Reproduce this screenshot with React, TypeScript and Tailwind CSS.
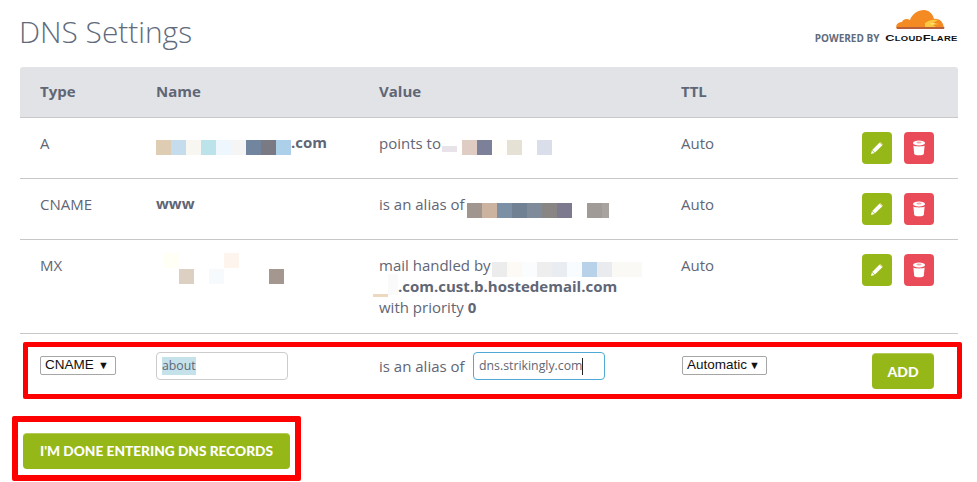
const Cells = ({ colors, className = "" }: { colors: string[]; className?: string }) => (
  <span className={`inline-flex ${className}`}>
    {colors.map((c, i) => (
      <span key={i} className="block h-[15px] w-[15px]" style={{ backgroundColor: c }} />
    ))}
  </span>
);

const PencilIcon = () => (
  <svg width="14" height="14" viewBox="0 0 14 14">
    <path d="M9.6 1.6 12.4 4.2 5 11.6 2.2 9z" fill="#fff" />
    <path d="M1.9 9.4 4.6 12 1 13z" fill="#fff" />
    <path d="M10.3 1 13 3.6l-.5.5L9.8 1.5z" fill="#e8e08a" />
  </svg>
);

const TrashIcon = () => (
  <svg width="14" height="16" viewBox="0 0 14 16">
    <ellipse cx="7" cy="3" rx="6" ry="2.6" fill="#fff" />
    <ellipse cx="7" cy="2.6" rx="2.6" ry="1" fill="#f3a9af" />
    <path d="M1.4 5.6C3 6.8 11 6.8 12.6 5.6L11.8 14c-.6 1.8-9 1.8-9.6 0z" fill="#fff" />
  </svg>
);

const RowButtons = () => (
  <div className="flex gap-3">
    <div className="flex h-8 w-[30px] items-center justify-center rounded-[4px] bg-[#96b718]">
      <PencilIcon />
    </div>
    <div className="flex h-8 w-[30px] items-center justify-center rounded-[4px] bg-[#ea4b58]">
      <TrashIcon />
    </div>
  </div>
);

const CloudLogo = () => (
  <svg width="50" height="23" viewBox="0 0 50 23" className="mr-[13px] block">
    <path
      d="M2 21c-2-3 0-7 5-7 1-3 5-4 8-2 2-6 8-10 14-10 5 0 9 4 10 9 5-1 10 3 10 10z"
      fill="#f38a22"
    />
    <path d="M2 21h47l.5-2H1.500z" fill="#b9603a" />
    <path d="M30 15c4-3 8-4 13-3l-5 3 6 1-6 1 3 2H30z" fill="#fbc93f" />
    <path d="M35 15.500h6l-4 1z" fill="#fff3b0" />
  </svg>
);

const SelectBox = ({ label, width }: { label: string; width: string }) => (
  <div
    className={`flex h-[19px] ${width} items-center justify-between rounded-[2px] border border-[#a6a6a6] bg-white pl-1 pr-[6px] font-['Liberation_Sans',sans-serif] text-[13.500px] text-[#111]`}
  >
    <span>{label}</span>
    <span className="text-[11px]">▼</span>
  </div>
);

export default function App() {
  return (
    <div className="relative h-[482px] w-[977px] overflow-hidden bg-white font-['Open_Sans',sans-serif] text-[15px] text-[#5f6675]">
      <div className="flex h-[67px] items-start justify-between pr-[19px] pl-[19px]">
        <h1 className="mt-[10px] text-[29.850px] leading-[44px] font-light text-[#5f6b7d]">DNS Settings</h1>
        <div className="mt-[8px] flex flex-col items-end">
          <CloudLogo />
          <div className="mt-[1px] flex h-[12px] items-center gap-[25px]">
            <span className="text-[10px] font-bold text-[#5f6b7d]">POWERED BY</span>
            <span className="origin-right scale-x-[1.35] font-['Liberation_Sans',sans-serif] text-[9.500px] font-bold tracking-[0.2px] text-[#111] [font-variant:small-caps]">
              CloudFlare
            </span>
          </div>
        </div>
      </div>

      <div className="mx-5 w-[938px]">
        <div className="grid h-[51px] grid-cols-[116px_223px_302px_1fr] items-center rounded-t-[3px] border-b border-[#c8c8c8] bg-[#e2e3e7] pb-[2px] pl-5 font-bold">
          <div>Type</div>
          <div>Name</div>
          <div>Value</div>
          <div>TTL</div>
        </div>

        <div className="grid h-[61px] grid-cols-[116px_223px_302px_181px_1fr] border-b border-[#c8c8c8] pl-5 leading-[20px]">
          <div className="pt-[15px]">A</div>
          <div className="flex items-start pt-[14px]">
            <Cells
              className="mt-[8px]"
              colors={["#dfcdb3", "#c5dced", "#f8f6f0", "#bde3ea", "#eef7fd", "#f5f5f5", "#72859f", "#7a7a84", "#acd0e9"]}
            />
            <span className="font-bold">.com</span>
          </div>
          <div className="flex items-start pt-[15px]">
            <span>points to</span>
            <span className="mt-[13px] ml-[1px] h-[6px] w-[15px] bg-[#e8e3e8]" />
            <Cells
              className="mt-[7px] ml-[5px]"
              colors={["#dfcdc3", "#7c8099", "#fffefb", "#e5e1d5", "#ffffff", "#dadeea"]}
            />
          </div>
          <div className="pt-[15px]">Auto</div>
          <div className="pt-[14px]">
            <RowButtons />
          </div>
        </div>

        <div className="grid h-[61px] grid-cols-[116px_223px_302px_181px_1fr] border-b border-[#c8c8c8] pl-5 leading-[20px]">
          <div className="pt-[15px]">CNAME</div>
          <div className="pt-[14px] font-bold">www</div>
          <div className="flex items-start pt-[15px]">
            <span>is an alias of</span>
            <Cells
              className="mt-[9px] ml-[2px]"
              colors={["#a0968f", "#ccb3a0", "#7c90a5", "#6f8193", "#7f8a9b", "#8a8585", "#7d7a90", "#ffffff", "#a09b96"]}
            />
            <span className="mt-[9px] h-[15px] w-[7px] bg-[#a8a39e]" />
          </div>
          <div className="pt-[15px]">Auto</div>
          <div className="pt-[14px]">
            <RowButtons />
          </div>
        </div>

        <div className="grid h-[94px] grid-cols-[116px_223px_302px_181px_1fr] border-b border-[#c8c8c8] pl-5 leading-[21px]">
          <div className="pt-[15px]">MX</div>
          <div className="pt-[13px] pl-2">
            <div className="flex">
              <span className="h-[15px] w-[15px] bg-[#fffff6]" />
              <span className="ml-[45px] h-[15px] w-[15px] bg-[#fdf4ee]" />
            </div>
            <Cells
              className="ml-[15px]"
              colors={["#dcd0c2", "#ffffff", "#f6fafd", "#ffffff", "#ffffff", "#ffffff", "#a49790"]}
            />
          </div>
          <div className="pt-[15px]">
            <div className="flex h-[21px]">
              <span>mail handled by</span>
              <Cells
                className="mt-[7px] ml-[1px]"
                colors={["#ececec", "#fdf9f5", "#fbfcfe", "#eeeeee", "#e9edf2", "#f8fcff", "#b8d3e9", "#eaebee", "#faf9f5", "#faf9f5"]}
              />
            </div>
            <div className="flex h-[21px]">
              <span className="mt-[18px] -ml-[6px] h-[3px] w-[15px] bg-[#eed8bf]" />
              <span className="-mt-[2px] h-[21px] w-[10px] bg-[#fafafa]" />
              <span className="font-bold">.com.cust.b.hostedemail.com</span>
            </div>
            <div>
              with priority <span className="font-bold">0</span>
            </div>
          </div>
          <div className="pt-[15px]">Auto</div>
          <div className="pt-[14px]">
            <RowButtons />
          </div>
        </div>

        <div className="grid h-[56px] grid-cols-[116px_223px_302px_191px_1fr] items-start pt-[18px] pl-5">
          <div className="pt-[4px]">
            <SelectBox label="CNAME" width="w-[76px]" />
          </div>
          <div className="flex h-[28px] w-[132px] items-center rounded-[4px] border border-[#cccccc] pl-[5px] text-[12.300px]">
            <span className="bg-[#c5e1ea] leading-[18px]">about</span>
          </div>
          <div className="flex items-center">
            <span className="w-[94px]">is an alias of</span>
            <div className="flex h-[28px] w-[132px] items-center rounded-[4px] border border-[#4fa9d5] pl-[5px] text-[12.300px]">
              <span>dns.strikingly.com</span>
              <span className="h-[17px] w-px bg-[#222]" />
            </div>
          </div>
          <div className="pt-[4px] pl-[1px]">
            <SelectBox label="Automatic" width="w-[85px]" />
          </div>
          <div className="mt-[1px] flex h-[36px] w-[62px] items-center justify-center rounded-[4px] border-t border-[#b3cb5a] bg-[#96b718] font-['Lato',sans-serif] text-[14px] font-black text-white">
            ADD
          </div>
        </div>
      </div>

      <div className="mt-[43px] ml-[23px] flex h-[36px] w-[267px] items-center justify-center rounded-[4px] border-t border-[#b3cb5a] bg-[#96b718] font-['Lato',sans-serif] text-[13.700px] font-black text-white">
        I'M DONE ENTERING DNS RECORDS
      </div>

      {/* red annotation boxes drawn over the page */}
      <div className="absolute top-[342px] left-[23px] h-[57px] w-[939px] rounded-[2px] border-[5px] border-[#ff0000]" />
      <div className="absolute top-[416px] left-[12px] h-[65px] w-[289px] rounded-[2px] border-[6px] border-[#ff0000]" />
    </div>
  );
}
